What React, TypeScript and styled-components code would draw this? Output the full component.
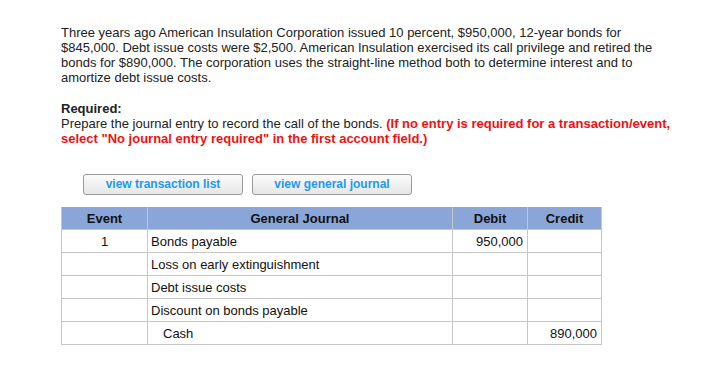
import React from "react";
import styled, { createGlobalStyle } from "styled-components";

const Global = createGlobalStyle`
  html, body { margin: 0; padding: 0; background: #fff; }
  body { font-family: "Liberation Sans", Arial, Helvetica, sans-serif; color: #222; }
`;

const Page = styled.div`
  padding: 25px 0 0 61px;
  width: 612px;
`;

const Para = styled.p`
  margin: 0;
  font-size: 13px;
  line-height: 15px;
`;

const Required = styled.div`
  margin-top: 16px;
  font-size: 13px;
  line-height: 15px;
`;

const Bold = styled.div`
  font-weight: bold;
`;

const Red = styled.span`
  color: #ee1111;
  font-weight: bold;
`;

const ButtonRow = styled.div`
  display: flex;
  gap: 9px;
  margin: 28px 0 0 22px;
`;

const Btn = styled.button`
  width: 160px;
  height: 21px;
  padding: 0;
  border: 1px solid #9a9a9a;
  border-radius: 3px;
  background: linear-gradient(#fbfbfb, #e6e6e6);
  color: #2299f2;
  font-family: "Liberation Sans", Arial, sans-serif;
  font-weight: bold;
  font-size: 12px;
  line-height: 19px;
  cursor: pointer;
`;

const Table = styled.table`
  margin-top: 12px;
  border-collapse: collapse;
  width: 540px;
  font-size: 13px;
  table-layout: fixed;
`;

const Col = styled.col<{ $w: number }>`
  width: ${(p) => p.$w}px;
`;

const Th = styled.th`
  height: 22px;
  padding: 0;
  background: #8aa5d8;
  border: 1px solid #c6c6c6;
  border-top: none;
  font-weight: bold;
  text-align: center;
  color: #111;
`;

const Td = styled.td<{ $align?: string; $indent?: boolean }>`
  height: 22px;
  padding: 0 ${(p) => (p.$align === "right" ? "4px" : "3px")} 0
    ${(p) => (p.$indent ? "15px" : "3px")};
  border: 1px solid #c6c6c6;
  text-align: ${(p) => p.$align || "left"};
  color: #111;
  overflow: hidden;
  white-space: nowrap;
`;

const rows = [
  { ev: "1", acct: "Bonds payable", dr: "950,000", cr: "", indent: false },
  { ev: "", acct: "Loss on early extinguishment", dr: "", cr: "", indent: false },
  { ev: "", acct: "Debt issue costs", dr: "", cr: "", indent: false },
  { ev: "", acct: "Discount on bonds payable", dr: "", cr: "", indent: false },
  { ev: "", acct: "Cash", dr: "", cr: "890,000", indent: true },
];

export default function App() {
  return (
    <>
      <Global />
      <Page>
        <Para>
          Three years ago American Insulation Corporation issued 10 percent, $950,000, 12-year bonds for
          $845,000. Debt issue costs were $2,500. American Insulation exercised its call privilege and
          retired the bonds for $890,000. The corporation uses the straight-line method both to determine
          interest and to amortize debt issue costs.
        </Para>
        <Required>
          <Bold>Required:</Bold>
          Prepare the journal entry to record the call of the bonds.{" "}
          <Red>(If no entry is required for a transaction/event,</Red>
          <br />
          <Red>select "No journal entry required" in the first account field.)</Red>
        </Required>
        <ButtonRow>
          <Btn>view transaction list</Btn>
          <Btn>view general journal</Btn>
        </ButtonRow>
        <Table>
          <colgroup>
            <Col $w={86} />
            <Col $w={305} />
            <Col $w={75} />
            <Col $w={74} />
          </colgroup>
          <thead>
            <tr>
              <Th>Event</Th>
              <Th>General Journal</Th>
              <Th>Debit</Th>
              <Th>Credit</Th>
            </tr>
          </thead>
          <tbody>
            {rows.map((r, i) => (
              <tr key={i}>
                <Td $align="center">{r.ev}</Td>
                <Td $indent={r.indent}>{r.acct}</Td>
                <Td $align="right">{r.dr}</Td>
                <Td $align="right">{r.cr}</Td>
              </tr>
            ))}
          </tbody>
        </Table>
      </Page>
    </>
  );
}
